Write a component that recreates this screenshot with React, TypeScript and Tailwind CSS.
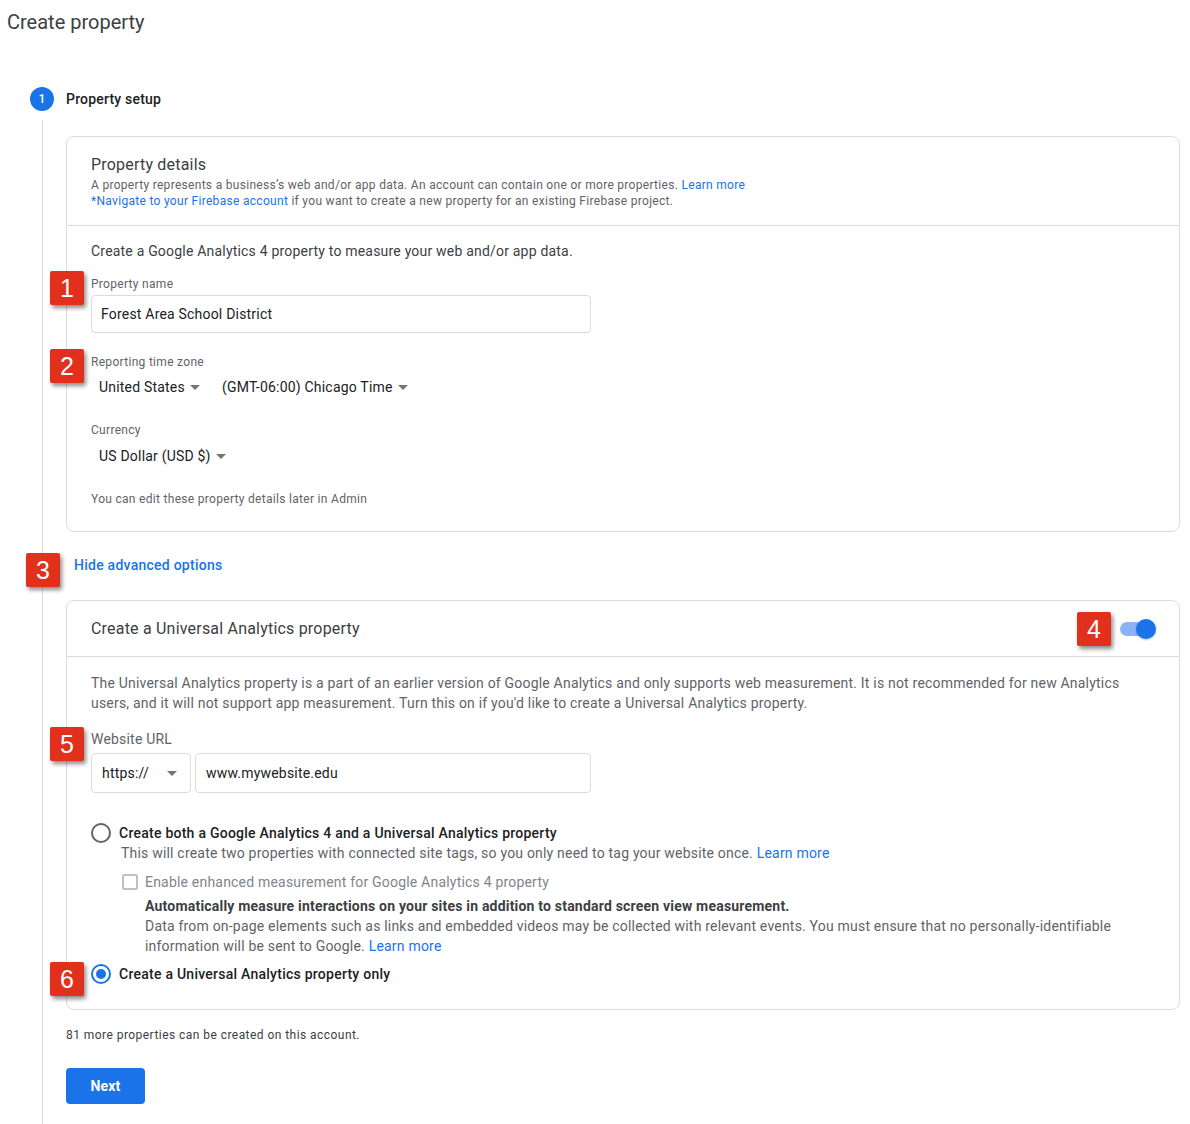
import React from 'react';

const Badge = ({ n, left, top }: { n: string; left: number; top: number }) => (
  <div
    className="absolute flex h-[34px] w-[34px] items-center justify-center rounded-[2px] bg-[#e1311d] text-[25px] leading-none text-white shadow-[2px_3px_4px_rgba(0,0,0,0.45)]"
    style={{ left, top, fontFamily: '"Liberation Sans", Arial, sans-serif' }}
  >
    {n}
  </div>
);

const Caret = () => (
  <svg width="10" height="5" viewBox="0 0 10 5" className="ml-[5px] shrink-0">
    <path d="M0 0h10L5 5z" fill="#757575" />
  </svg>
);

const Radio = ({ checked }: { checked?: boolean }) => (
  <span
    className={`flex h-[20px] w-[20px] shrink-0 items-center justify-center rounded-full border-2 ${
      checked ? 'border-[#1a73e8]' : 'border-[#5f6368]'
    }`}
  >
    {checked && <span className="h-[10px] w-[10px] rounded-full bg-[#1a73e8]" />}
  </span>
);

export default function App() {
  return (
    <div
      className="relative min-h-[1124px] bg-white text-[#202124] tracking-[0.2px]"
      style={{ fontFamily: 'Roboto, "Noto Sans", Arial, sans-serif' }}
    >
      <h1 className="pl-[7px] pt-[8px] text-[20px] leading-[28px] tracking-normal text-[#3c4043]">Create property</h1>

      {/* step header */}
      <div className="mt-[51px] flex items-center gap-[12px] pl-[30px]">
        <span className="flex h-[24px] w-[24px] items-center justify-center rounded-full bg-[#1a73e8] text-[12px] font-medium text-white">
          1
        </span>
        <span className="text-[14px] font-medium leading-[20px] text-[#202124]">Property setup</span>
      </div>

      <div className="ml-[42px] mt-[9px] border-l border-[#dadce0] pb-[20px] pl-[23px] pr-[10px] pt-[16px]">
        {/* Property details card */}
        <div className="rounded-[8px] border border-[#dadce0]">
          <div className="border-b border-[#dadce0] px-[24px] pb-[16px] pt-[16px]">
            <div className="text-[16px] leading-[24px] text-[#3c4043]">Property details</div>
            <p className="text-[12px] leading-[16px] tracking-[0.3px] text-[#5f6368]">
              A property represents a business’s web and/or app data. An account can contain one or more properties.{' '}
              <span className="text-[#1a73e8]">Learn more</span>
            </p>
            <p className="text-[12px] leading-[16px] tracking-[0.3px] text-[#5f6368]">
              <span className="text-[#1a73e8]">*Navigate to your Firebase account</span> if you want to create a new
              property for an existing Firebase project.
            </p>
          </div>
          <div className="px-[24px] pb-[24px] pt-[15px]">
            <p className="text-[14px] leading-[20px] text-[#3c4043]">
              Create a Google Analytics 4 property to measure your web and/or app data.
            </p>
            <div className="mt-[15px] text-[12px] leading-[16px] tracking-[0.3px] text-[#5f6368]">Property name</div>
            <div className="mt-[3px] flex h-[38px] w-[500px] items-center rounded-[4px] border border-[#dadce0] px-[9px] text-[14px] text-[#202124]">
              Forest Area School District
            </div>

            <div className="mt-[21px] text-[12px] leading-[16px] tracking-[0.3px] text-[#5f6368]">Reporting time zone</div>
            <div className="mt-[7px] flex items-center pl-[8px] text-[14px] leading-[20px] text-[#202124]">
              <span>United States</span>
              <Caret />
              <span className="ml-[22px]">(GMT-06:00) Chicago Time</span>
              <Caret />
            </div>

            <div className="mt-[25px] text-[12px] leading-[16px] tracking-[0.3px] text-[#5f6368]">Currency</div>
            <div className="mt-[8px] flex items-center pl-[8px] text-[14px] leading-[20px] text-[#202124]">
              <span>US Dollar (USD $)</span>
              <Caret />
            </div>

            <p className="mt-[25px] text-[12px] leading-[16px] tracking-[0.3px] text-[#5f6368]">
              You can edit these property details later in Admin
            </p>
          </div>
        </div>

        <div className="mt-[23px] pl-[8px] text-[14px] font-medium leading-[20px] tracking-[0.25px] text-[#1a73e8]">
          Hide advanced options
        </div>

        {/* Universal Analytics card */}
        <div className="mt-[25px] rounded-[8px] border border-[#dadce0]">
          <div className="flex h-[56px] items-center justify-between border-b border-[#dadce0] px-[24px] pt-[1px]">
            <span className="text-[16px] leading-[24px] text-[#3c4043]">Create a Universal Analytics property</span>
            <span className="relative mr-[-1px] flex h-[20px] w-[36px] items-center">
              <span className="h-[14px] w-[34px] rounded-full bg-[#8ab4f8]" />
              <span className="absolute right-0 top-0 h-[20px] w-[20px] rounded-full bg-[#1a73e8] shadow-[0_1px_2px_rgba(0,0,0,0.25)]" />
            </span>
          </div>
          <div className="px-[24px] pb-[25px] pt-[16px]">
            <p className="text-[14px] leading-[20px] text-[#5f6368]">
              The Universal Analytics property is a part of an earlier version of Google Analytics and only supports
              web measurement. It is not recommended for new Analytics users, and it will not support app measurement.
              Turn this on if you'd like to create a Universal Analytics property.
            </p>
            <div className="mt-[16px] text-[14px] leading-[20px] text-[#5f6368]">Website URL</div>
            <div className="mt-[4px] flex gap-[4px]">
              <div className="flex h-[40px] w-[100px] items-center justify-between rounded-[4px] border border-[#dadce0] pl-[10px] pr-[13px] text-[14px] text-[#202124]">
                <span>https://</span>
                <Caret />
              </div>
              <div className="flex h-[40px] w-[396px] items-center rounded-[4px] border border-[#dadce0] px-[10px] text-[14px] text-[#202124]">
                www.mywebsite.edu
              </div>
            </div>

            <div className="mt-[30px] flex items-center gap-[8px]">
              <Radio />
              <span className="text-[14px] font-medium leading-[20px] tracking-[0.25px] text-[#202124]">
                Create both a Google Analytics 4 and a Universal Analytics property
              </span>
            </div>
            <p className="pl-[30px] text-[14px] leading-[20px] text-[#5f6368]">
              This will create two properties with connected site tags, so you only need to tag your website once.{' '}
              <span className="text-[#1a73e8]">Learn more</span>
            </p>

            <div className="mt-[9px] flex items-center gap-[7px] pl-[31px]">
              <span className="h-[16px] w-[16px] shrink-0 rounded-[2px] border-2 border-[#bdc1c6]" />
              <span className="text-[14px] leading-[20px] text-[#80868b]">
                Enable enhanced measurement for Google Analytics 4 property
              </span>
            </div>
            <div className="mt-[4px] pl-[54px] text-[14px] leading-[20px] text-[#5f6368]">
              <p className="font-bold text-[#3c4043]">
                Automatically measure interactions on your sites in addition to standard screen view measurement.
              </p>
              <p>
                Data from on-page elements such as links and embedded videos may be collected with relevant events. You
                must ensure that no personally-identifiable information will be sent to Google.{' '}
                <span className="text-[#1a73e8]">Learn more</span>
              </p>
            </div>

            <div className="mt-[8px] flex items-center gap-[8px]">
              <Radio checked />
              <span className="text-[14px] font-medium leading-[20px] tracking-[0.25px] text-[#202124]">
                Create a Universal Analytics property only
              </span>
            </div>
          </div>
        </div>

        <p className="mt-[17px] text-[12px] leading-[16px] tracking-[0.45px] text-[#3c4043]">
          81 more properties can be created on this account.
        </p>
        <button className="mt-[25px] h-[36px] w-[79px] rounded-[4px] bg-[#1a73e8] text-[14px] font-bold text-white">
          Next
        </button>
      </div>

      <Badge n="1" left={50} top={271} />
      <Badge n="2" left={50} top={349} />
      <Badge n="3" left={26} top={553} />
      <Badge n="4" left={1077} top={612} />
      <Badge n="5" left={50} top={727} />
      <Badge n="6" left={50} top={962} />
    </div>
  );
}
